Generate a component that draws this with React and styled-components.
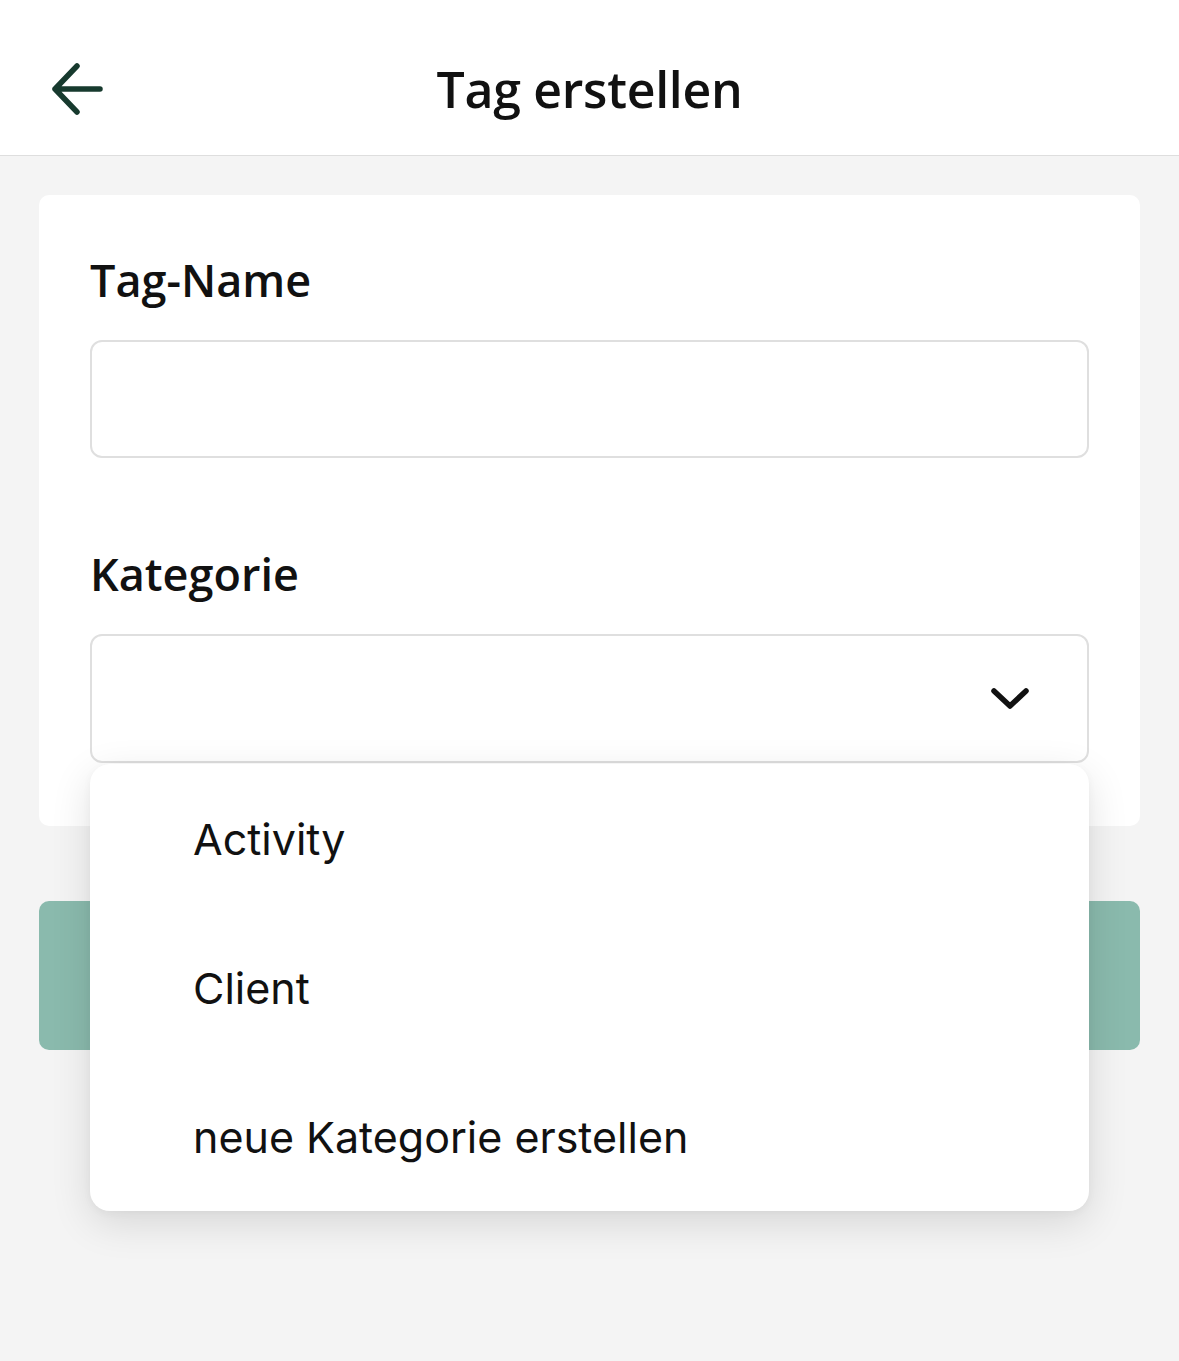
import React from "react";
import styled, { createGlobalStyle } from "styled-components";

const GlobalStyle = createGlobalStyle`
  html, body {
    margin: 0;
    padding: 0;
    background: #f4f4f4;
  }
  body {
    font-family: "Open Sans", "Noto Sans", sans-serif;
    color: #111;
  }
  * { box-sizing: border-box; }
`;

const Screen = styled.div`
  min-height: 1361px;
  background: #f4f4f4;
`;

const Header = styled.header`
  position: relative;
  height: 156px;
  background: #fff;
  border-bottom: 1px solid #dedede;
  display: flex;
  align-items: center;
  justify-content: center;
`;

const BackButton = styled.button`
  position: absolute;
  left: 50px;
  top: 63px;
  width: 54px;
  height: 52px;
  padding: 0;
  border: none;
  background: none;
  display: flex;
  align-items: center;
  justify-content: center;
  cursor: pointer;
`;

const Title = styled.h1`
  margin: 0;
  font-family: "Open Sans", sans-serif;
  font-weight: 600;
  font-size: 50px;
  line-height: 1;
  letter-spacing: -0.3px;
  color: #111;
  transform: translateY(11px);
`;

const Main = styled.main`
  padding: 39px 39px 0;
  display: flex;
  flex-direction: column;
`;

const Card = styled.section`
  background: #fff;
  border-radius: 10px;
  padding: 55px 51px 63px;
  display: flex;
  flex-direction: column;
`;

const Field = styled.div`
  position: relative;
  display: flex;
  flex-direction: column;
  gap: 30px;
  margin-top: ${(p) => p.$offset || 0}px;
`;

const Label = styled.label`
  font-family: "Open Sans", sans-serif;
  font-weight: 600;
  font-size: 45px;
  line-height: 60px;
  color: #111;
`;

const TextInput = styled.input`
  height: 118px;
  border: 2px solid #dfdfdf;
  border-radius: 12px;
  background: #fff;
  padding: 0 30px;
  font-size: 40px;
  outline: none;
`;

const SelectBox = styled.div`
  height: 129px;
  border: 2px solid #dfdfdf;
  border-radius: 12px;
  background: #fff;
  display: flex;
  align-items: center;
  justify-content: flex-end;
  padding-right: 58px;
`;

const Menu = styled.ul`
  position: absolute;
  left: 0;
  right: 0;
  top: calc(100% + 1px);
  margin: 0;
  padding: 0;
  list-style: none;
  background: #fff;
  border-radius: 20px;
  box-shadow: 0 12px 40px rgba(0, 0, 0, 0.12), 0 2px 8px rgba(0, 0, 0, 0.04);
  z-index: 10;
`;

const MenuItem = styled.li`
  height: 149px;
  display: flex;
  align-items: center;
  padding-left: 103px;
  font-family: Inter, "Noto Sans", sans-serif;
  font-weight: 400;
  font-size: 43px;
  color: #111;
`;

const SubmitButton = styled.button`
  margin-top: 75px;
  height: 149px;
  border: none;
  border-radius: 10px;
  background: #8abaad;
`;

const ArrowLeft = () => (
  <svg width="54" height="52" viewBox="0 0 54 52" fill="none">
    <path
      d="M27 3 L5 26 L27 49 M5 26 H50"
      stroke="#173a2e"
      strokeWidth="5.5"
      strokeLinecap="round"
      strokeLinejoin="round"
    />
  </svg>
);

const ChevronDown = () => (
  <svg width="38" height="24" viewBox="0 0 38 24" fill="none">
    <path
      d="M3 4 L19 19 L35 4"
      stroke="#111"
      strokeWidth="5.5"
      strokeLinecap="round"
      strokeLinejoin="round"
    />
  </svg>
);

const categories = ["Activity", "Client", "neue Kategorie erstellen"];

export default function App() {
  return (
    <>
      <GlobalStyle />
      <Screen>
        <Header>
          <BackButton aria-label="Zurück">
            <ArrowLeft />
          </BackButton>
          <Title>Tag erstellen</Title>
        </Header>
        <Main>
          <Card>
            <Field>
              <Label>Tag-Name</Label>
              <TextInput type="text" />
            </Field>
            <Field $offset={86}>
              <Label>Kategorie</Label>
              <SelectBox>
                <ChevronDown />
              </SelectBox>
              <Menu>
                {categories.map((c) => (
                  <MenuItem key={c}>{c}</MenuItem>
                ))}
              </Menu>
            </Field>
          </Card>
          <SubmitButton />
        </Main>
      </Screen>
    </>
  );
}
